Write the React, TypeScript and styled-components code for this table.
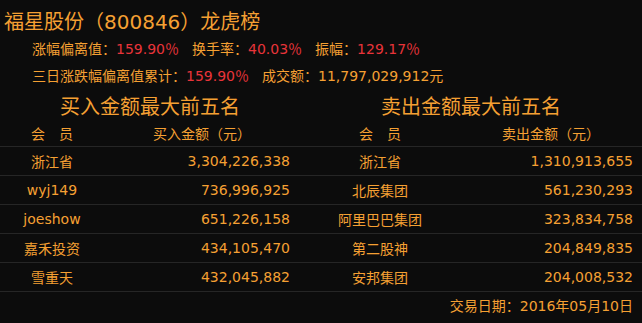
import React from "react";
import styled, { createGlobalStyle } from "styled-components";

const GlobalStyle = createGlobalStyle`
  html, body {
    margin: 0;
    padding: 0;
    background: #0c0c0c;
  }
  body {
    font-family: "DejaVu Sans", "Noto Sans CJK SC", sans-serif;
    color: #f5a033;
  }
`;

const Page = styled.div`
  width: 642px;
  height: 323px;
  background: #0c0c0c;
  overflow: hidden;
`;

const Title = styled.h1`
  margin: 8px 0 0;
  padding-left: 4px;
  height: 28px;
  line-height: 28px;
  font-size: 20px;
  font-weight: normal;
  color: #f5a033;
  white-space: nowrap;
`;

const InfoLine = styled.div<{ h: number }>`
  display: flex;
  gap: 13px;
  padding-left: 32px;
  height: ${(p) => p.h}px;
  line-height: ${(p) => p.h}px;
  font-size: 14px;
  white-space: nowrap;
`;

const Label = styled.span`
  color: #f5a033;
`;

const Red = styled.span`
  color: #e8343a;
`;

const Table = styled.table`
  width: 642px;
  border-collapse: collapse;
  table-layout: fixed;
  font-size: 14px;
`;

const Heading = styled.th`
  height: 30px;
  font-size: 20px;
  font-weight: normal;
  text-align: center;
  color: #f5a033;
  padding: 0;
`;

const HeadRow = styled.tr`
  border-bottom: 1px solid #262626;
`;

const HeadCell = styled.th`
  height: 26px;
  font-weight: normal;
  text-align: center;
  padding: 0;
  color: #f5a033;
`;

const Row = styled.tr`
  border-bottom: 1px solid #262626;
`;

const NameCell = styled.td`
  height: 28px;
  text-align: center;
  padding: 0;
`;

const AmountCell = styled.td<{ pr: number }>`
  height: 28px;
  text-align: right;
  padding: 0 ${(p) => p.pr}px 0 0;
`;

const DateCell = styled.td`
  height: 26px;
  text-align: right;
  padding: 0 9px 0 0;
`;

interface Entry {
  buyName: string;
  buyAmount: string;
  sellName: string;
  sellAmount: string;
}

const rows: Entry[] = [
  { buyName: "浙江省", buyAmount: "3,304,226,338", sellName: "浙江省", sellAmount: "1,310,913,655" },
  { buyName: "wyj149", buyAmount: "736,996,925", sellName: "北辰集团", sellAmount: "561,230,293" },
  { buyName: "joeshow", buyAmount: "651,226,158", sellName: "阿里巴巴集团", sellAmount: "323,834,758" },
  { buyName: "嘉禾投资", buyAmount: "434,105,470", sellName: "第二股神", sellAmount: "204,849,835" },
  { buyName: "雪重天", buyAmount: "432,045,882", sellName: "安邦集团", sellAmount: "204,008,532" },
];

const App: React.FC = () => {
  return (
    <Page>
      <GlobalStyle />
      <Title>福星股份（800846）龙虎榜</Title>
      <InfoLine h={26}>
        <span>
          <Label>涨幅偏离值：</Label>
          <Red>159.90％</Red>
        </span>
        <span>
          <Label>换手率：</Label>
          <Red>40.03％</Red>
        </span>
        <span>
          <Label>振幅：</Label>
          <Red>129.17％</Red>
        </span>
      </InfoLine>
      <InfoLine h={28}>
        <span>
          <Label>三日涨跌幅偏离值累计：</Label>
          <Red>159.90％</Red>
        </span>
        <span>
          <Label>成交额：</Label>
          <Label>11,797,029,912元</Label>
        </span>
      </InfoLine>
      <Table>
        <colgroup>
          <col style={{ width: 104 }} />
          <col style={{ width: 196 }} />
          <col style={{ width: 160 }} />
          <col style={{ width: 182 }} />
        </colgroup>
        <thead>
          <tr>
            <Heading colSpan={2}>买入金额最大前五名</Heading>
            <Heading colSpan={2}>卖出金额最大前五名</Heading>
          </tr>
          <HeadRow>
            <HeadCell>会　员</HeadCell>
            <HeadCell>买入金额（元）</HeadCell>
            <HeadCell>会　员</HeadCell>
            <HeadCell>卖出金额（元）</HeadCell>
          </HeadRow>
        </thead>
        <tbody>
          {rows.map((r) => (
            <Row key={r.buyName}>
              <NameCell>{r.buyName}</NameCell>
              <AmountCell pr={10}>{r.buyAmount}</AmountCell>
              <NameCell>{r.sellName}</NameCell>
              <AmountCell pr={9}>{r.sellAmount}</AmountCell>
            </Row>
          ))}
          <tr>
            <DateCell colSpan={4}>交易日期：2016年05月10日</DateCell>
          </tr>
        </tbody>
      </Table>
    </Page>
  );
};

export default App;
